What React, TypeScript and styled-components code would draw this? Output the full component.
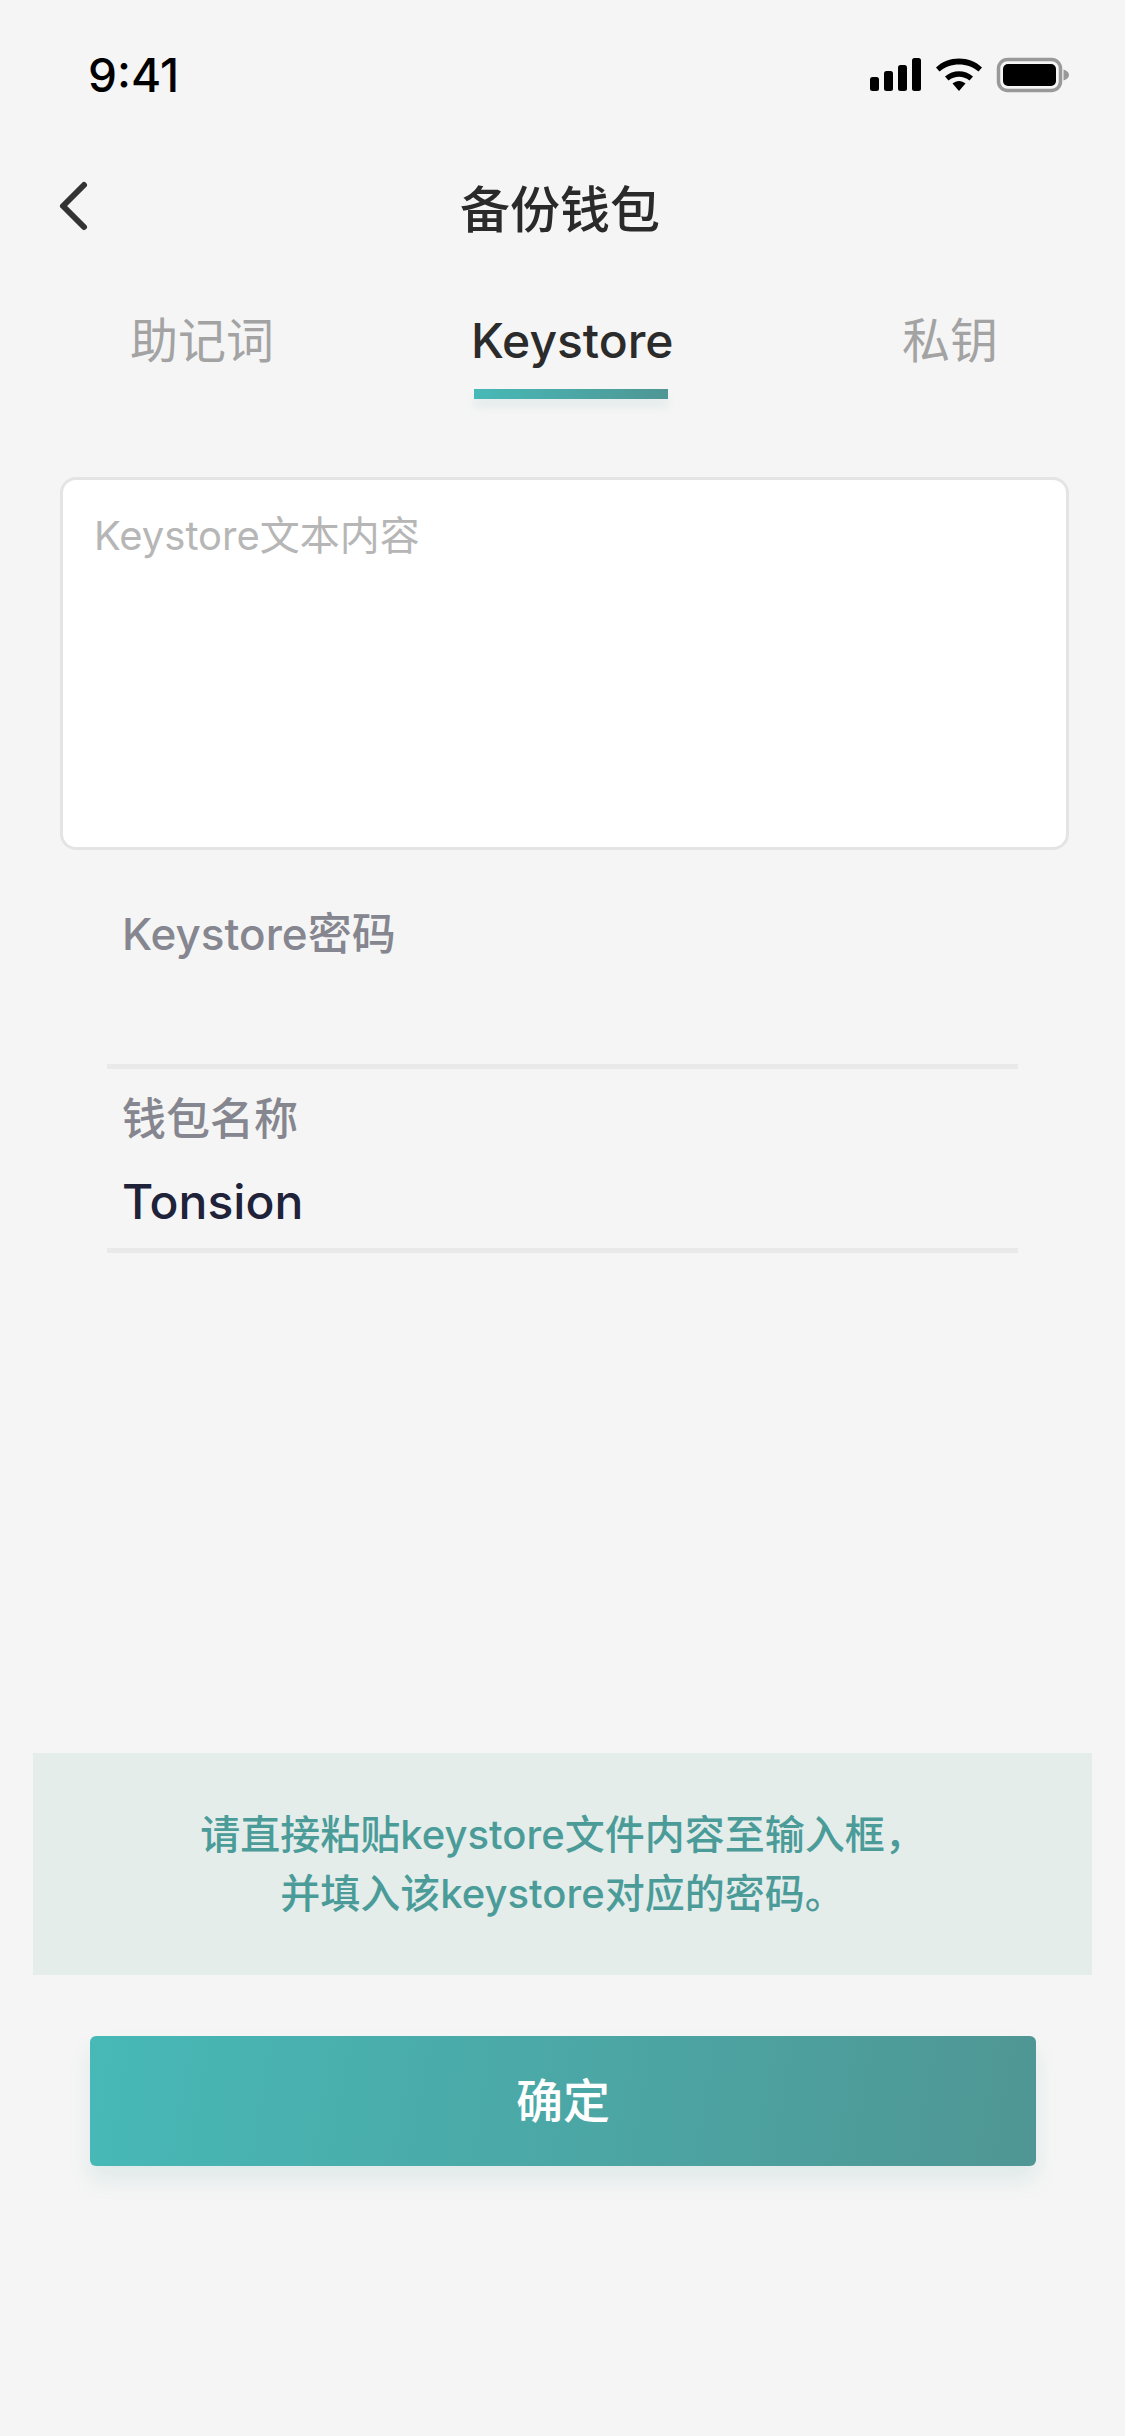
import React from "react";
import styled, { createGlobalStyle } from "styled-components";

const FONT = `Inter, "Noto Sans CJK SC", sans-serif`;

const Global = createGlobalStyle`
  html, body { margin: 0; padding: 0; background: #f5f5f5; }
  * { box-sizing: border-box; }
`;

const Page = styled.div`
  width: 1125px;
  height: 2436px;
  background: #f5f5f5;
  font-family: ${FONT};
  display: flex;
  flex-direction: column;
  overflow: hidden;
`;

const StatusBar = styled.div`
  height: 150px;
  flex: none;
  display: flex;
  align-items: center;
  justify-content: space-between;
  padding: 0 54px 0 88px;
`;

const Time = styled.span`
  font-size: 46px;
  line-height: 50px;
  font-weight: 500;
  color: #000;
`;

const StatusIcons = styled.svg`
  display: block;
  width: 201px;
  height: 36px;
`;

const NavBar = styled.div`
  height: 116px;
  flex: none;
  display: flex;
  align-items: center;
  padding-left: 58px;
`;

const BackButton = styled.svg`
  display: block;
  width: 32px;
  height: 54px;
  margin-right: 370px;
  margin-top: -4px;
`;

const Title = styled.h1`
  margin: 4px 0 0;
  font-size: 50px;
  line-height: 60px;
  font-weight: 500;
  color: #2a2a2a;
`;

const Tabs = styled.div`
  display: grid;
  grid-template-columns: 341px 431px auto;
  justify-content: start;
  padding-left: 130px;
  flex: none;
`;

const Tab = styled.div`
  padding-top: 45px;
  display: flex;
  flex-direction: column;
  align-items: flex-start;
`;

const TabLabel = styled.span<{ $active?: boolean }>`
  font-size: 48px;
  line-height: 60px;
  font-weight: ${(p) => (p.$active ? 500 : 400)};
  color: ${(p) => (p.$active ? "#2b2b2b" : "#a3a3a3")};
`;

const TabBar = styled.div`
  width: 194px;
  height: 10px;
  margin: 18px 0 0 3px;
  background: linear-gradient(90deg, #47b9b7, #4f9694);
  box-shadow: 0 8px 10px rgba(71, 150, 148, 0.1);
`;

const TextBox = styled.div`
  flex: none;
  margin: 78px 56px 0 60px;
  height: 373px;
  background: #fff;
  border: 3px solid #e4e4e4;
  border-radius: 16px;
  padding: 30px 31px;
`;

const Placeholder = styled.span`
  display: block;
  font-size: 40px;
  line-height: 52px;
  color: #b6b6b6;
`;

const Field = styled.div<{ $height: number }>`
  flex: none;
  height: ${(p) => p.$height}px;
  margin: 0 107px;
  padding-left: 15px;
  border-bottom: 5px solid #e9e9e9;
  display: flex;
  flex-direction: column;
  justify-content: flex-start;
`;

const FieldLabel = styled.span<{ $top: number }>`
  margin-top: ${(p) => p.$top}px;
  font-size: 44px;
  line-height: 54px;
  font-weight: 500;
  color: #85868f;
`;

const FieldValue = styled.span`
  margin-top: 27px;
  font-size: 48px;
  line-height: 58px;
  font-weight: 500;
  color: #20223a;
`;

const Notice = styled.div`
  flex: none;
  margin: 500px 33px 0;
  height: 222px;
  background: #e5edeb;
  padding-top: 52px;
  text-align: center;
  font-size: 40px;
  line-height: 59px;
  font-weight: 500;
  color: #4b9c99;
`;

const ConfirmButton = styled.button`
  flex: none;
  margin: 61px 0 0 90px;
  width: 946px;
  height: 130px;
  border: none;
  border-radius: 6px;
  background: linear-gradient(100deg, #47b9b7, #4f9694);
  box-shadow: 0 14px 22px rgba(71, 150, 148, 0.12);
  color: #fff;
  font-family: ${FONT};
  font-size: 47px;
  font-weight: 500;
  padding: 0 0 8px;
`;

export default function App() {
  return (
    <Page>
      <Global />
      <StatusBar>
        <Time>9:41</Time>
        <StatusIcons viewBox="0 0 201 36" aria-hidden="true">
          <rect x="0" y="20" width="9" height="14" rx="2.5" fill="#000" />
          <rect x="14" y="14" width="9" height="20" rx="2.5" fill="#000" />
          <rect x="28" y="8" width="9" height="26" rx="2.5" fill="#000" />
          <rect x="42" y="1" width="9" height="33" rx="2.5" fill="#000" />
          <path d="M66 10.5C78 -1.5 100 -1.5 112 10.5L108.5 14.5C98 5 80 5 69.5 14.5Z" fill="#000" />
          <path d="M75 19.5C83 12.5 95 12.5 103 19.5L99.5 23.5C93 18.5 85 18.5 78.5 23.5Z" fill="#000" />
          <path d="M82.5 26.5C86.5 23 91.5 23 95.5 26.5L89 34Z" fill="#000" />
          <rect x="128.5" y="2.5" width="62" height="31" rx="9" fill="none" stroke="#999" strokeWidth="3.5" />
          <rect x="133" y="7" width="53" height="22" rx="5" fill="#000" />
          <path d="M193.5 12.5C197 13.5 199 15.5 199 18C199 20.5 197 22.5 193.5 23.5Z" fill="#999" />
        </StatusIcons>
      </StatusBar>
      <NavBar>
        <BackButton viewBox="0 0 32 54" aria-hidden="true">
          <path d="M26 6L5 27L26 48" fill="none" stroke="#333" strokeWidth="6" strokeLinecap="round" strokeLinejoin="round" />
        </BackButton>
        <Title>备份钱包</Title>
      </NavBar>
      <Tabs>
        <Tab>
          <TabLabel>助记词</TabLabel>
        </Tab>
        <Tab>
          <TabLabel $active>Keystore</TabLabel>
          <TabBar />
        </Tab>
        <Tab>
          <TabLabel>私钥</TabLabel>
        </Tab>
      </Tabs>
      <TextBox>
        <Placeholder>Keystore文本内容</Placeholder>
      </TextBox>
      <Field $height={219}>
        <FieldLabel $top={57}>Keystore密码</FieldLabel>
      </Field>
      <Field $height={184}>
        <FieldLabel $top={23}>钱包名称</FieldLabel>
        <FieldValue>Tonsion</FieldValue>
      </Field>
      <Notice>
        请直接粘贴keystore文件内容至输入框，
        <br />
        并填入该keystore对应的密码。
      </Notice>
      <ConfirmButton>确定</ConfirmButton>
    </Page>
  );
}
